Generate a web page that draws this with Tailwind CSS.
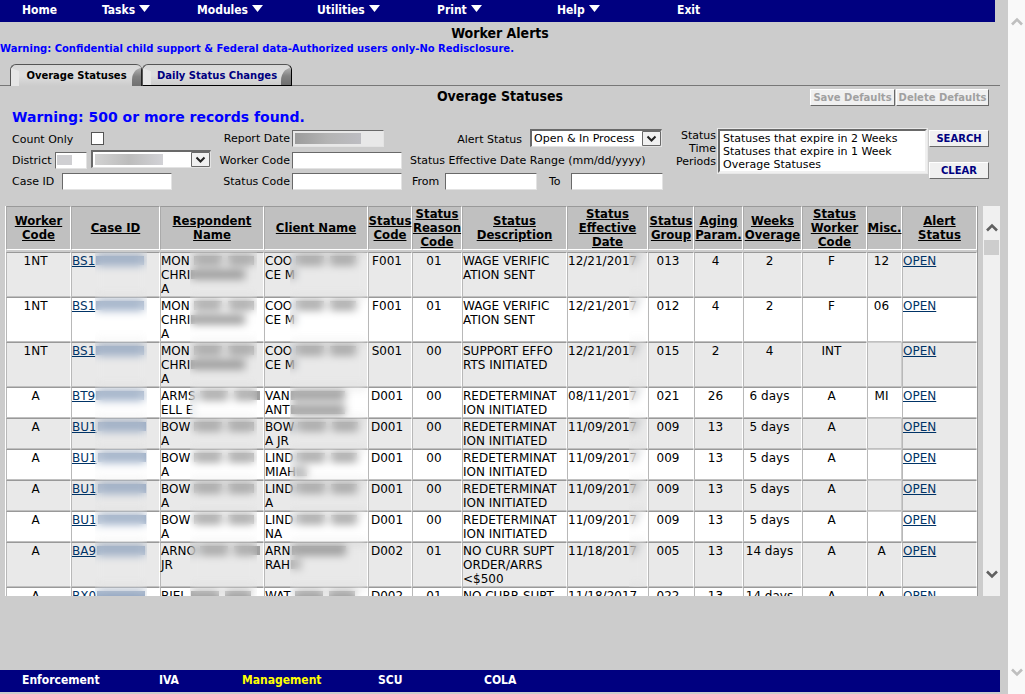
<!DOCTYPE html>
<html lang="en">
<head>
<meta charset="utf-8">
<title>Worker Alerts</title>
<script src="https://cdn.jsdelivr.net/npm/@tailwindcss/browser@4"></script>
</head>
<body class="flex h-screen overflow-hidden bg-[#cccccc] font-['DejaVu_Sans',Verdana,sans-serif] text-[11px] text-black">
<div class="flex min-w-0 flex-1 flex-col pr-2">

  <nav class="mr-[5px] grid h-[22px] shrink-0 grid-cols-[80px_95px_120px_120px_120px_120px_auto] bg-[#000080] pl-[22px] font-['DejaVu_Sans_Condensed','DejaVu_Sans',sans-serif] text-xs leading-[20px] font-bold text-white">
    <a href="#">Home</a>
    <a href="#" class="flex gap-1">Tasks <svg class="mt-[5px] h-[7px] w-[11px]" viewBox="0 0 11 7" fill="#fff"><path d="M0 0h11L5.500 7z"/></svg></a>
    <a href="#" class="flex gap-1">Modules <svg class="mt-[5px] h-[7px] w-[11px]" viewBox="0 0 11 7" fill="#fff"><path d="M0 0h11L5.500 7z"/></svg></a>
    <a href="#" class="flex gap-1">Utilities <svg class="mt-[5px] h-[7px] w-[11px]" viewBox="0 0 11 7" fill="#fff"><path d="M0 0h11L5.500 7z"/></svg></a>
    <a href="#" class="flex gap-1">Print <svg class="mt-[5px] h-[7px] w-[11px]" viewBox="0 0 11 7" fill="#fff"><path d="M0 0h11L5.500 7z"/></svg></a>
    <a href="#" class="flex gap-1">Help <svg class="mt-[5px] h-[7px] w-[11px]" viewBox="0 0 11 7" fill="#fff"><path d="M0 0h11L5.500 7z"/></svg></a>
    <a href="#">Exit</a>
  </nav>

  <main class="flex min-h-0 flex-1 flex-col">
    <h1 class="text-center font-['DejaVu_Sans_Condensed','DejaVu_Sans',sans-serif] text-sm leading-[22px] font-bold">Worker Alerts</h1>
    <p class="text-[10px] leading-[10px] font-bold whitespace-nowrap text-[#0000ff]">Warning: Confidential child support &amp; Federal data-Authorized users only-No Redisclosure.</p>

    <div class="mt-[10px] flex h-[22px] text-[10px] leading-[22px] font-bold">
      <div class="w-[10px] border-b border-[#777777]"></div>
      <button class="relative h-[22px] w-[132px] overflow-hidden rounded-t-[6px] border-t border-l border-[#555555] bg-gradient-to-b from-[#d8d8d8] via-[#dedede] to-[#cccccc] text-[10px] font-bold">
        <svg class="absolute top-0 left-0 h-[21px] w-full" viewBox="0 0 131 21" preserveAspectRatio="none">
          <path d="M0 3L8 6V21H0z" fill="#e6e6e6"/>
          <defs><linearGradient id="wedge" x1="0" y1="0" x2="0" y2="1"><stop offset="0" stop-color="#b5b5b5"/><stop offset=".5" stop-color="#828282"/><stop offset="1" stop-color="#707070"/></linearGradient></defs>
          <path d="M131 2L125 5Q121 9 121 15V21H131z" fill="url(#wedge)"/><path d="M130.500 0V21" stroke="#222"/>
        </svg>
        <span class="relative">Overage Statuses</span>
      </button>
      <button class="relative h-[22px] w-[150px] overflow-hidden rounded-t-[6px] border border-[#555555] border-r-black border-b-black bg-gradient-to-b from-[#d8d8d8] via-[#dedede] to-[#cccccc] text-[10px] font-bold text-[#000080]">
        <svg class="absolute top-0 left-0 h-[20px] w-full" viewBox="0 0 148 19" preserveAspectRatio="none">
          <path d="M0 3L8 6V19H0z" fill="#e6e6e6"/>
          <path d="M148 2L142 5Q138 9 138 15V19H148z" fill="url(#wedge)"/>
        </svg>
        <span class="relative">Daily Status Changes</span>
      </button>
      <div class="flex-1 border-b border-[#777777]"></div>
    </div>

    <div class="grid h-[21px] grid-cols-[1fr_auto_1fr]">
      <h2 class="col-start-2 font-['DejaVu_Sans_Condensed','DejaVu_Sans',sans-serif] text-sm leading-[21px] font-bold">Overage Statuses</h2>
      <div class="flex justify-end gap-px pt-[3px] pr-[11px]">
        <button disabled class="h-[17px] w-[85px] border border-t-white border-r-[#696969] border-b-[#696969] border-l-white bg-[#f0f0f0] text-[10px] leading-[15px] font-bold whitespace-nowrap text-[#a0a0a0]">Save Defaults</button>
        <button disabled class="h-[17px] w-[93px] border border-t-white border-r-[#696969] border-b-[#696969] border-l-white bg-[#f0f0f0] text-[10px] leading-[15px] font-bold whitespace-nowrap text-[#a0a0a0]">Delete Defaults</button>
      </div>
    </div>
    <p class="pl-3 text-sm leading-[20px] font-bold text-[#0000ff]">Warning: 500 or more records found.</p>

    <form class="flex pt-[2px] pl-3" onsubmit="return false">
      <div class="grid auto-rows-[21px] grid-cols-[200px_78px_112px_262px] leading-[17px]">
        <div class="flex pt-[2px]"><label for="cnt" class="w-[79px]">Count Only</label><input id="cnt" type="checkbox" class="mt-px size-[13px] appearance-none border border-[#555555] bg-white"></div>
        <label for="rd" class="pt-px text-right">Report Date</label>
        <div class="relative pt-px pl-[2px]"><input id="rd" readonly class="block h-[17px] w-[92px] border border-t-[#696969] border-r-[#e3e3e3] border-b-[#e3e3e3] border-l-[#696969] bg-[#e8e8e8]"><span class="absolute top-[4px] left-[5px] h-[11px] w-[66px] bg-gradient-to-r from-[#9c9c9c] via-[#b4b4b4] to-[#bdbdc2]"></span></div>
        <div class="flex justify-end gap-2 pr-[2px]"><label for="as" class="pt-[2px]">Alert Status</label>
          <span class="relative"><select id="as" class="block h-[18px] w-[132px] appearance-none border border-t-2 border-l-2 border-t-[#696969] border-r-[#e3e3e3] border-b-[#e3e3e3] border-l-[#696969] bg-white pl-[2px] leading-[15px]"><option>Open &amp; In Process</option></select>
          <svg class="pointer-events-none absolute top-[2px] right-px h-[15px] w-[19px]" viewBox="0 0 19 15"><path d="M.5.5h18v14H.5z" fill="#f0f0f0" stroke="#696969"/><path d="M5.500 5.500l4 4 4-4" fill="none" stroke="#222" stroke-width="2"/></svg></span></div>

        <div class="flex"><label for="di" class="w-[43px] pt-[2px]">District</label>
          <span class="relative mt-[2px]"><input id="di" class="block h-[17px] w-[32px] border border-t-[#696969] border-r-[#e3e3e3] border-b-[#e3e3e3] border-l-[#696969] bg-white"><span class="absolute top-[3px] left-[2px] h-[10px] w-[15px] bg-[#cfcfd2]"></span></span>
          <span class="relative ml-[4px]"><select id="ds" aria-label="District name" class="block h-[18px] w-[120px] appearance-none border border-t-2 border-l-2 border-t-[#696969] border-r-[#e3e3e3] border-b-[#e3e3e3] border-l-[#696969] bg-white"><option></option></select>
          <span class="pointer-events-none absolute top-[4px] left-[4px] h-[11px] w-[68px] bg-gradient-to-r from-[#d2d2d2] via-[#bcbcbc] to-[#d2d2d6]"></span>
          <svg class="pointer-events-none absolute top-[2px] right-px h-[15px] w-[19px]" viewBox="0 0 19 15"><path d="M.5.5h18v14H.5z" fill="#f0f0f0" stroke="#696969"/><path d="M5.500 5.500l4 4 4-4" fill="none" stroke="#222" stroke-width="2"/></svg></span></div>
        <label for="wc" class="pt-[2px] text-right whitespace-nowrap">Worker Code</label>
        <div class="pt-[2px] pl-[2px]"><input id="wc" class="block h-[17px] w-[110px] border border-t-[#696969] border-r-[#e3e3e3] border-b-[#e3e3e3] border-l-[#696969] bg-white"></div>
        <div class="pt-[2px] pl-2 whitespace-nowrap">Status Effective Date Range (mm/dd/yyyy)</div>

        <div class="flex pt-[2px]"><label for="ci" class="w-[50px]">Case ID</label><input id="ci" class="block h-[17px] w-[110px] border border-t-[#696969] border-r-[#e3e3e3] border-b-[#e3e3e3] border-l-[#696969] bg-white"></div>
        <label for="sc" class="pt-[2px] text-right">Status Code</label>
        <div class="pt-[2px] pl-[2px]"><input id="sc" class="block h-[17px] w-[110px] border border-t-[#696969] border-r-[#e3e3e3] border-b-[#e3e3e3] border-l-[#696969] bg-white"></div>
        <div class="flex pt-[2px] pl-[10px]"><label for="fr" class="w-[33px]">From</label><input id="fr" class="block h-[17px] w-[92px] border border-t-[#696969] border-r-[#e3e3e3] border-b-[#e3e3e3] border-l-[#696969] bg-white"><label for="to" class="w-[34px] pl-3">To</label><input id="to" class="block h-[17px] w-[92px] border border-t-[#696969] border-r-[#e3e3e3] border-b-[#e3e3e3] border-l-[#696969] bg-white"></div>
      </div>
      <label for="tp" class="w-[52px] text-right leading-[13px]">Status<br>Time<br>Periods</label>
      <select id="tp" multiple size="3" class="ml-[2px] block h-[44px] w-[209px] appearance-none overflow-hidden border-2 border-t-[#696969] border-r-[#f0f0f0] border-b-[#f0f0f0] border-l-[#696969] bg-white pt-px leading-[13px] outline outline-[#e8e8e8]">
        <option class="h-[13px] min-h-0 p-0 pl-[3px] leading-[13px]">Statuses that expire in 2 Weeks</option>
        <option class="h-[13px] min-h-0 p-0 pl-[3px] leading-[13px]">Statuses that expire in 1 Week</option>
        <option class="h-[13px] min-h-0 p-0 pl-[3px] leading-[13px]">Overage Statuses</option>
      </select>
      <div class="ml-[2px] flex flex-col gap-[15px] pt-px">
        <button class="h-[17px] w-[60px] border border-t-white border-r-[#696969] border-b-[#696969] border-l-white bg-[#f0f0f0] text-[10px] leading-[15px] font-bold text-[#000080]">SEARCH</button>
        <button class="h-[17px] w-[60px] border border-t-white border-r-[#696969] border-b-[#696969] border-l-white bg-[#f0f0f0] text-[10px] leading-[15px] font-bold text-[#000080]">CLEAR</button>
      </div>
    </form>

    <div class="mt-[14px] ml-[5px] flex h-[390px] overflow-hidden">
      <div class="min-w-0 flex-1 overflow-hidden border-r border-l border-r-[#999999] border-l-white">
        <table class="w-full table-fixed border-separate border-spacing-0 text-xs leading-[14px]">
          <colgroup><col class="w-[65px]"><col class="w-[89px]"><col class="w-[104px]"><col class="w-[104px]"><col class="w-[44px]"><col class="w-[50px]"><col class="w-[105px]"><col class="w-[81px]"><col class="w-[46px]"><col class="w-[49px]"><col class="w-[59px]"><col class="w-[65px]"><col class="w-[35px]"><col class="w-[75px]"></colgroup>
          <thead id="head" class="font-['DejaVu_Sans_Condensed','DejaVu_Sans',sans-serif] text-[13px] underline"></thead>
          <tbody id="rows"></tbody>
        </table>
      </div>
      <div class="ml-[5px] flex w-[17px] flex-col items-center bg-[#f0f0f0] pt-[17px] pb-[17px]">
        <svg class="h-[9px] w-[12px] shrink-0" viewBox="0 0 12 9"><path d="M1 7.500l5-5 5 5" fill="none" stroke="#606060" stroke-width="2.600"/></svg>
        <div class="mt-2 h-[15px] w-[15px] bg-[#cdcdcd]"></div>
        <svg class="mt-auto h-[9px] w-[12px] shrink-0" viewBox="0 0 12 9"><path d="M1 1.500l5 5 5-5" fill="none" stroke="#606060" stroke-width="2.600"/></svg>
      </div>
    </div>
  </main>

  <footer class="mb-[2px] grid h-[22px] shrink-0 grid-cols-[137px_83px_136px_106px_auto] bg-[#000080] pl-[22px] font-['DejaVu_Sans_Condensed','DejaVu_Sans',sans-serif] text-xs leading-[20px] font-bold text-white">
    <a href="#">Enforcement</a><a href="#">IVA</a><a href="#" class="text-[#ffff00]">Management</a><a href="#">SCU</a><a href="#">COLA</a>
  </footer>
</div>

<div class="flex w-[17px] shrink-0 flex-col items-center justify-between bg-[#f9f9f9] pt-[17px] pb-[17px]">
  <svg class="h-[9px] w-[12px]" viewBox="0 0 12 9"><path d="M1 7.500l5-5 5 5" fill="none" stroke="#bfbfbf" stroke-width="2.600"/></svg>
  <svg class="h-[9px] w-[12px]" viewBox="0 0 12 9"><path d="M1 1.500l5 5 5-5" fill="none" stroke="#bfbfbf" stroke-width="2.600"/></svg>
</div>

<script>
const heads = ['Worker<br>Code','Case ID','Respondent<br>Name','Client Name','Status<br>Code','Status<br>Reason<br>Code','Status<br>Description','Status<br>Effective<br>Date','Status<br>Group','Aging<br>Param.','Weeks<br>Overage','Status<br>Worker<br>Code','Misc.','Alert<br>Status'];
document.getElementById('head').innerHTML = '<tr>' + heads.map(h =>
  `<th class="h-[44px] border-t border-r border-b border-l border-t-[#999999] border-r-white border-b-white border-l-[#aaaaaa] bg-[#c0c0c0] p-0 text-center align-middle"><a href="#" class="flex justify-center whitespace-nowrap"><span>${h}</span></a></th>`).join('') +
  '</tr><tr aria-hidden="true"><td colspan="14" class="h-[2px] bg-[#cccccc] p-0"></td></tr>';

// "~" marks redacted text in two words, "=" one long word, "-" a short one, "#" a case number.
const smudge = {
  '~': '<span class="ml-1 inline-block h-[9px] w-[28px] bg-[#a0a0a0]"></span><span class="ml-[6px] inline-block h-[9px] w-[26px] bg-[#a0a0a0]"></span>',
  '=': '<span class="ml-px inline-block h-[9px] w-[54px] bg-[#949494]"></span>',
  '-': '<span class="ml-px inline-block h-[9px] w-[10px] bg-[#a8a8a8]"></span>',
  '#': '<span class="ml-px inline-block h-[9px] w-[48px] bg-[#8fa3bf]"></span>'
};
const fill = s => s.replace(/[~=\-#]/g, m => smudge[m]).replace(/\n/g, '<br>');
const blur = {
  1: '<span class="absolute -top-px -bottom-px left-[23px] w-[52px] backdrop-blur-[5px]"></span>',
  2: '<span class="absolute -top-px -bottom-px left-[29px] w-[67px] backdrop-blur-[4px]"></span>',
  3: '<span class="absolute -top-px -bottom-px left-[25px] w-[77px] backdrop-blur-[4px]"></span>',
  7: '<span class="absolute -top-px -bottom-px left-[61px] w-[17px] backdrop-blur-[4px]"></span>'
};
const R = 'REDETERMINAT\nION INITIATED', W = 'WAGE VERIFIC\nATION SENT', N = 'NO CURR SUPT\nORDER/ARRS\n&lt;$500';
const data = [
  ['1NT','BS1#','MON~\nCHRI=\nA','COO~\nCE M','F001','01',W,'12/21/2017','013','4','2','F','12'],
  ['1NT','BS1#','MON~\nCHRI=\nA','COO~\nCE M','F001','01',W,'12/21/2017','012','4','2','F','06'],
  ['1NT','BS1#','MON~\nCHRI=\nA','COO~\nCE M','S001','00','SUPPORT EFFO\nRTS INITIATED','12/21/2017','015','2','4','INT',''],
  ['A','BT9#','ARMS~\nELL E','VAN=\nANT=','D001','00',R,'08/11/2017','021','26','6 days','A','MI'],
  ['A','BU1#','BOW~\nA','BOW~\nA JR','D001','00',R,'11/09/2017','009','13','5 days','A',''],
  ['A','BU1#','BOW~\nA','LIND~\nMIAH-','D001','00',R,'11/09/2017','009','13','5 days','A',''],
  ['A','BU1#','BOW~\nA','LIND~\nA','D001','00',R,'11/09/2017','009','13','5 days','A',''],
  ['A','BU1#','BOW~\nA','LIND~\nNA','D001','00',R,'11/09/2017','009','13','5 days','A',''],
  ['A','BA9#','ARNO~\nJR','ARN=\nRAH-','D002','01',N,'11/18/2017','005','13','14 days','A','A'],
  ['A','BX0#','BIEL~\nA','WAT~\nA','D002','01',N,'11/18/2017','022','13','14 days','A','A']
];
const left = [1, 2, 3, 6, 7, 13];
document.getElementById('rows').innerHTML = data.map((row, r) =>
  `<tr class="${r % 2 ? 'bg-white' : 'bg-[#e9e9e9]'}">` + [...row, 'OPEN'].map((c, i) => {
    const line = i === 12 && !c ? 'border-t-[#cccccc] border-r-[#cccccc]' : 'border-t-[#999999] border-r-white';
    let body = i === 6 || i === 7 ? c.replace(/\n/g, '<br>') : fill(c);
    if (i === 1 || i === 13) body = `<a href="#" class="text-[#003366] underline">${body}</a>`;
    return `<td class="relative border ${line} border-b-[#c0c0c0] border-l-[#b8b8b8] p-0 pt-px align-top whitespace-nowrap ${left.includes(i) ? 'text-left' : 'pr-[6px] text-center'}">${body}${blur[i] && !(r === 9 && i === 7) ? blur[i] : ''}</td>`;
  }).join('') + '</tr>').join('');
</script>
</body>
</html>
